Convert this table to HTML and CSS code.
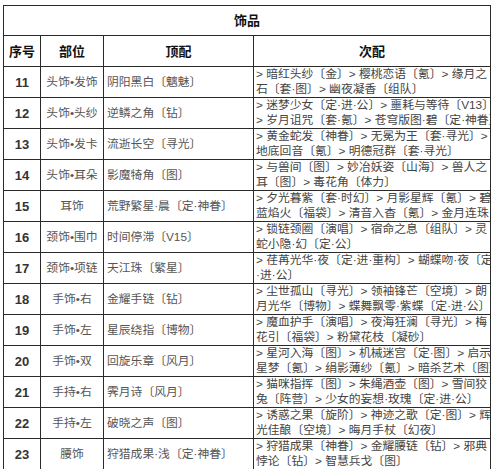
FILE: index.html
```html
<!DOCTYPE html>
<html lang="zh">
<head>
<meta charset="utf-8">
<link rel="stylesheet" href="styles.css">
</head>
<body>
<table class="tbl">
  <colgroup>
    <col class="c-no"><col class="c-part"><col class="c-top"><col class="c-sub">
  </colgroup>
  <thead>
    <tr class="title-row"><th colspan="4">饰品</th></tr>
    <tr class="head-row"><th>序号</th><th>部位</th><th>顶配</th><th>次配</th></tr>
  </thead>
  <tbody>
    <tr><td class="no">11</td><td class="part">头饰•发饰</td><td class="top">阴阳黑白〔魑魅〕</td><td class="sub"><div class="lines"><span>&gt; 暗红头纱〔金〕&gt; 樱桃恋语〔氪〕&gt; 缘月之</span><span>石〔套·图〕&gt; 幽夜凝香〔组队〕</span></div></td></tr>
    <tr><td class="no">12</td><td class="part">头饰•头纱</td><td class="top">逆鳞之角〔钻〕</td><td class="sub"><div class="lines"><span>&gt; 迷梦少女〔定·进·公〕&gt; 噩耗与等待〔V13〕</span><span>&gt; 岁月诅咒〔套·氪〕&gt; 苍穹版图·碧〔定·神眷〕</span></div></td></tr>
    <tr><td class="no">13</td><td class="part">头饰•发卡</td><td class="top">流逝长空〔寻光〕</td><td class="sub"><div class="lines"><span>&gt; 黄金蛇发〔神眷〕&gt; 无冕为王〔套·寻光〕&gt;</span><span>地底回音〔氪〕&gt; 明德冠群〔套·寻光〕</span></div></td></tr>
    <tr><td class="no">14</td><td class="part">头饰•耳朵</td><td class="top">影魔犄角〔图〕</td><td class="sub"><div class="lines"><span>&gt; 与兽间〔图〕&gt; 妙冶妖姿〔山海〕&gt; 兽人之</span><span>耳〔图〕&gt; 毒花角〔体力〕</span></div></td></tr>
    <tr><td class="no">15</td><td class="part">耳饰</td><td class="top">荒野繁星·晨〔定·神眷〕</td><td class="sub"><div class="lines"><span>&gt; 夕光暮紫〔套·时幻〕&gt; 月影星辉〔氪〕&gt; 碧</span><span>蓝焰火〔福袋〕&gt; 清音入杳〔氪〕&gt; 金月连珠</span></div></td></tr>
    <tr><td class="no">16</td><td class="part">颈饰•围巾</td><td class="top">时间停滞〔V15〕</td><td class="sub"><div class="lines"><span>&gt; 锁链颈圈〔演唱〕&gt; 宿命之息〔组队〕&gt; 灵</span><span>蛇小隐·幻〔定·公〕</span></div></td></tr>
    <tr><td class="no">17</td><td class="part">颈饰•项链</td><td class="top">天江珠〔繁星〕</td><td class="sub"><div class="lines"><span>&gt; 荏苒光华·夜〔定·进·重构〕&gt; 蝴蝶吻·夜〔定</span><span>·进·公〕</span></div></td></tr>
    <tr><td class="no">18</td><td class="part">手饰•右</td><td class="top">金耀手链〔钻〕</td><td class="sub"><div class="lines"><span>&gt; 尘世孤山〔寻光〕&gt; 领袖锋芒〔空境〕&gt; 朗</span><span>月光华〔博物〕&gt; 蝶舞飘零·紫蝶〔定·进·公〕</span></div></td></tr>
    <tr><td class="no">19</td><td class="part">手饰•左</td><td class="top">星辰绕指〔博物〕</td><td class="sub"><div class="lines"><span>&gt; 魔血护手〔演唱〕&gt; 夜海狂澜〔寻光〕&gt; 梅</span><span>花引〔福袋〕&gt; 粉黛花枝〔凝砂〕</span></div></td></tr>
    <tr><td class="no">20</td><td class="part">手饰•双</td><td class="top">回旋乐章〔风月〕</td><td class="sub"><div class="lines"><span>&gt; 星河入海〔图〕&gt; 机械迷宫〔定·图〕&gt; 启示</span><span>星梦〔氪〕&gt; 绢影薄纱〔氪〕&gt; 暗杀艺术〔图〕</span></div></td></tr>
    <tr><td class="no">21</td><td class="part">手持•右</td><td class="top">霁月诗〔风月〕</td><td class="sub"><div class="lines"><span>&gt; 猫咪指挥〔图〕&gt; 朱绳酒壶〔图〕&gt; 雪间狡</span><span>兔〔阵营〕&gt; 少女的妄想·玫瑰〔定·进·公〕</span></div></td></tr>
    <tr><td class="no">22</td><td class="part">手持•左</td><td class="top">破晓之声〔图〕</td><td class="sub"><div class="lines"><span>&gt; 诱惑之果〔旋阶〕&gt; 神迹之歌〔定·图〕&gt; 辉</span><span>光佳酿〔空境〕&gt; 晦月手杖〔幻夜〕</span></div></td></tr>
    <tr><td class="no">23</td><td class="part">腰饰</td><td class="top">狩猎成果·浅〔定·神眷〕</td><td class="sub"><div class="lines"><span>&gt; 狩猎成果〔神眷〕&gt; 金耀腰链〔钻〕&gt; 邪典</span><span>悖论〔钻〕&gt; 智慧兵戈〔图〕</span></div></td></tr>
  </tbody>
</table>
</body>
</html>
```

FILE: styles.css
```css
html, body {
  margin: 0;
  background: #ffffff;
}
body {
  padding: 5px 0 0 3px;
  font-family: "Liberation Sans", "Noto Sans CJK SC", sans-serif;
  color: #444;
  line-height: 15px;
}
.tbl {
  border-collapse: collapse;
  table-layout: fixed;
  width: 487px;
}
.c-no { width: 37px; }
.c-part { width: 63px; }
.c-top { width: 150px; }
.c-sub { width: 237px; }
.tbl th, .tbl td {
  border: 1px solid #2a2a2a;
  padding: 0;
  overflow: hidden;
  white-space: nowrap;
  line-height: 15px;
}
.tbl th {
  font-size: 13px;
  font-weight: bold;
  color: #111;
  text-align: center;
}
.title-row { height: 30px; }
.head-row { height: 31px; }
.tbl tbody tr { height: 30.7px; }
.no {
  text-align: center;
  font-size: 13px;
  font-weight: bold;
  color: #333;
}
.part {
  text-align: center;
  font-size: 11.8px;
  color: #555;
}
.top {
  font-size: 11.8px;
  color: #555;
  padding-left: 3px !important;
}
.sub {
  font-size: 11.8px;
  color: #444;
  padding-left: 2px !important;
}
.lines {
  display: flex;
  flex-direction: column;
  height: 30px;
  overflow: hidden;
}
.lines span {
  display: block;
  line-height: 15px;
  white-space: nowrap;
}
```
